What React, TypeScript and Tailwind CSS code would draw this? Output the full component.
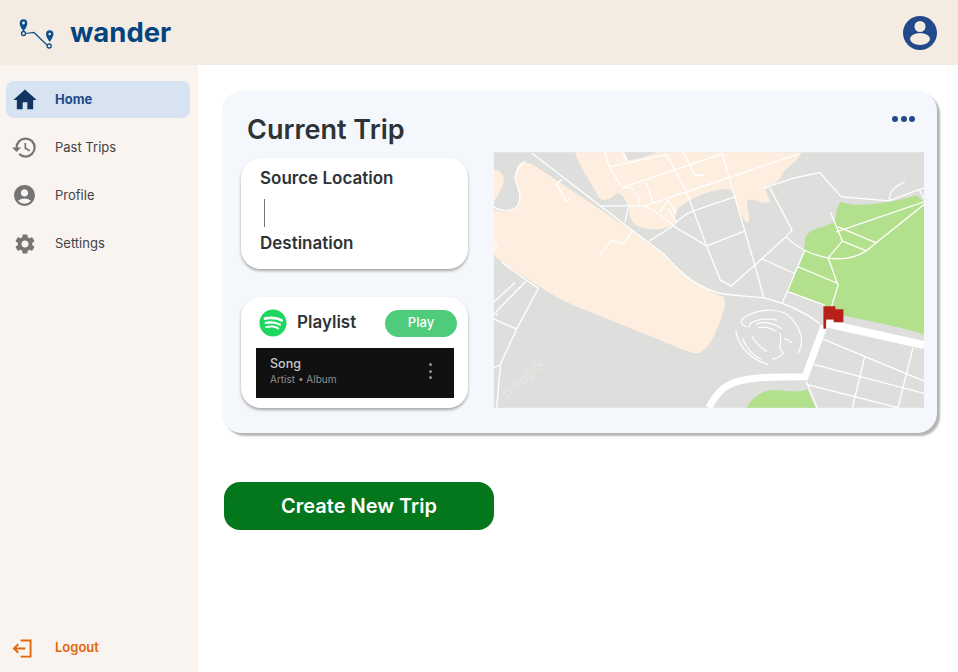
import { MdAccountCircle, MdHistory, MdHome, MdSettings } from 'react-icons/md';
import { FaSpotify } from 'react-icons/fa';

const thinRoads = [
    'M125 203 L420 430 L520 505 C570 560 610 600 680 622 C740 635 790 632 830 640 C890 655 950 685 990 715',
    'M12 365 C30 378 60 382 80 365 C100 340 85 310 75 280 C78 255 90 240 105 228',
    'M200 295 L228 348 L240 342 M200 295 L217 282',
    'M330 362 L465 362 M415 365 L405 412',
    'M428 437 L400 475 L365 465 L330 508',
    'M358 245 L530 208 M345 201 L358 245 L397 307 L425 307 L447 335 L447 360 M397 201 L412 228',
    'M397 307 L700 205 M470 293 L490 355 M530 208 L590 320 L650 482 L692 585 L724 602 L795 540 L888 455 L907 435 L840 308',
    'M580 201 L615 270 L646 270',
    'M465 362 L930 205 M465 362 C490 372 520 395 555 425 L650 482',
    'M510 380 L535 345 L560 385 M535 372 L560 410',
    'M477 468 L545 425 C570 400 590 385 608 378 L735 335',
    'M650 482 L765 438',
    'M697 205 L795 540 L822 638',
    'M820 310 L905 280 L990 262 L1055 335 L1198 347 L1303 308',
    'M1198 347 C1200 320 1210 305 1245 290',
    'M1290 315 L1303 340',
    'M888 455 C930 495 970 510 1015 518 C1070 528 1120 510 1150 480 L1303 358',
    'M1022 380 L1058 468 L1015 518 L1045 600 L1025 665',
    'M1040 440 L1303 350 M1045 425 L1160 473 M1058 468 L1130 497',
    'M945 495 L877 655 M815 520 L915 565 M925 545 L1045 595 M890 618 L1005 660',
    'M12 702 L80 732 M35 532 L145 610 L80 732 L32 835 L20 968 M12 848 L32 838',
    'M12 650 L75 592 M18 680 L108 588 M12 682 L24 690',
    'M1000 762 L1303 888 M972 838 L1303 925 M950 898 L1225 968',
    'M1125 815 L1088 968 M1270 788 L1225 968 M950 890 L982 968',
    'M12 470 L20 482 L12 495',
];

const rings = [
    'M770 725 C745 715 750 700 780 688 C820 668 880 670 905 700 C935 735 945 770 925 803',
    'M738 735 C745 790 790 825 835 838',
    'M758 760 C770 790 790 810 812 822 M788 755 C795 770 815 790 830 798',
    'M778 725 C775 710 820 695 860 705 M800 718 C820 705 850 715 875 730 M805 728 C825 722 845 730 858 738',
    'M870 745 C880 765 860 790 880 802 M885 762 C895 762 900 768 905 772',
    'M848 822 C860 820 872 815 880 805',
];

function Logo() {
    return (
        <svg viewBox="0 0 40 34" className="h-[34px] w-[40px] text-[#0b4f8a]" fill="none">
            <path d="M5.5 15.5 C2.5 11 1.7 9.5 1.7 7 A3.8 3.8 0 0 1 9.3 7 C9.3 9.5 8.5 11 5.5 15.5Z" fill="currentColor" />
            <circle cx="5.5" cy="7" r="1.4" fill="#f4ebe3" />
            <circle cx="5.5" cy="17.5" r="2" stroke="currentColor" strokeWidth="1.3" />
            <path d="M7.5 17.5 L16 16.5 L29 29" stroke="currentColor" strokeWidth="1.2" />
            <path d="M31.7 26 C28.8 21.5 28 20 28 18 A3.7 3.7 0 0 1 35.4 18 C35.4 20 34.6 21.5 31.7 26Z" fill="currentColor" />
            <circle cx="31.7" cy="18" r="1.3" fill="#f4ebe3" />
            <circle cx="31.2" cy="30" r="2" stroke="currentColor" strokeWidth="1.3" />
        </svg>
    );
}

function MapView() {
    return (
        <svg viewBox="12 201 1291 767" className="h-[256px] w-[430px] shrink-0">
            <rect x="12" y="201" width="1291" height="767" fill="#dededc" />
            <path d="M12 252 C35 255 45 275 40 295 C35 315 20 335 12 350Z" fill="#fdeee0" />
            <path
                d="M90 235 C105 225 125 235 140 245 L420 432 L520 505 C570 560 610 600 700 635 C710 650 705 670 695 695 C680 740 660 790 630 803 C605 810 570 790 510 765 L250 660 C190 635 110 580 35 530 L12 512 L12 372 C30 382 70 385 88 355 C95 325 78 300 75 272 C76 255 82 242 90 235Z"
                fill="#fdeee0"
            />
            <path
                d="M255 201 L935 201 C925 225 905 240 885 255 C870 275 875 290 830 305 C820 320 845 340 838 350 C820 360 790 335 772 345 C770 370 785 400 775 412 C760 418 740 345 725 315 C690 305 640 325 600 345 C570 360 555 375 555 410 C545 425 520 435 490 432 C450 430 415 420 418 368 C410 350 395 320 380 325 C360 340 345 355 325 335 C310 300 270 250 255 201Z"
                fill="#fdeee0"
            />
            <path d="M405 201 L500 201 C470 215 440 222 415 225Z" fill="#dededc" />
            <path
                d="M1052 350 C1100 368 1200 355 1280 330 L1303 350 L1303 748 C1220 720 1120 705 1060 690 L1005 660 L890 615 L905 585 C930 540 945 510 945 465 C950 435 985 430 1000 425 L1035 410 C1040 385 1040 365 1052 350Z"
                fill="#b2e08c"
            />
            <path d="M770 968 C790 935 815 915 860 915 C890 917 930 925 952 912 L978 968Z" fill="#b2e08c" />
            {thinRoads.map((d) => (
                <path key={d} d={d} fill="none" stroke="white" strokeWidth="4" />
            ))}
            {rings.map((d) => (
                <path key={d} d={d} fill="none" stroke="white" strokeWidth="3.5" strokeLinecap="round" />
            ))}
            <path d="M1010 715 L1303 780" fill="none" stroke="white" strokeWidth="24" />
            <path d="M1003 722 L946 875 C860 875 790 875 735 892 C695 905 675 935 657 968" fill="none" stroke="white" strokeWidth="21" />
            <path d="M1001 663 L1037 663 L1037 672 L1061 672 L1061 711 L1032 711 L1032 703 L1009 703 L1009 731 L1001 731Z" fill="#b8211a" />
            <text x="52" y="945" transform="rotate(-42 52 945)" fontSize="48" fill="white" opacity="0.22" fontFamily="Inter, sans-serif">
                freepik
            </text>
        </svg>
    );
}

export default function App() {
    return (
        <div className="flex h-[672px] flex-col bg-white font-['Inter',sans-serif]">
            {/* Top bar */}
            <header className="flex h-[65px] shrink-0 items-center justify-between bg-[#f4ebe3] pr-[21px] pl-[18px]">
                <div className="flex items-center gap-[12px]">
                    <Logo />
                    <span className="text-[27.5px] leading-none font-bold text-[#03447f]">wander</span>
                </div>
                <svg viewBox="0 0 34 34" className="h-[34px] w-[34px]">
                    <circle cx="17" cy="17" r="17" fill="#224a8b" />
                    <circle cx="17" cy="10.5" r="5.5" fill="#f4ebe3" />
                    <ellipse cx="17" cy="23" rx="10" ry="6" fill="#f4ebe3" />
                </svg>
            </header>

            <div className="flex min-h-0 flex-1">
                {/* Sidebar */}
                <aside className="flex w-[198px] shrink-0 flex-col justify-between bg-[#f9f4f0] pt-[16px] pr-[8px] pb-[12px] pl-[6px]">
                    <nav className="flex flex-col gap-[11px] text-[13px] text-[#3f4346]">
                        <a className="flex h-[37px] items-center rounded-lg bg-[#d8e3f2] font-bold text-[#224a8b]">
                            <span className="flex w-[49px] justify-center pr-[12px] text-[#123461]">
                                <MdHome size={28} />
                            </span>
                            Home
                        </a>
                        <a className="flex h-[37px] items-center">
                            <span className="flex w-[49px] justify-center pr-[12px] text-[#757575]">
                                <MdHistory size={27} />
                            </span>
                            Past Trips
                        </a>
                        <a className="flex h-[37px] items-center">
                            <span className="flex w-[49px] justify-center pr-[12px] text-[#757575]">
                                <MdAccountCircle size={25} />
                            </span>
                            Profile
                        </a>
                        <a className="flex h-[37px] items-center">
                            <span className="flex w-[49px] justify-center pr-[12px] text-[#757575]">
                                <MdSettings size={24} />
                            </span>
                            Settings
                        </a>
                    </nav>
                    <a className="flex h-[24px] items-center text-[13px] font-semibold text-[#e2660c]">
                        <span className="flex w-[49px] justify-center pr-[17px]">
                            <svg viewBox="0 0 22 20" className="h-[19px] w-[21px]" fill="none" stroke="currentColor" strokeWidth="2">
                                <path d="M9 1.5 H19.5 V18.5 H9" />
                                <path d="M14 10 H2 M6.5 5.5 L2 10 L6.5 14.5" />
                            </svg>
                        </span>
                        Logout
                    </a>
                </aside>

                {/* Main */}
                <main className="flex-1 pt-[26px] pr-[21px] pl-[24px]">
                    <section className="rounded-[20px] bg-[#f4f7fb] pr-[13px] pb-[25px] pl-[19px] shadow-[3px_3px_2px_#b5b5b5]">
                        <div className="flex h-[61px] items-center justify-between pt-[15px] pl-[6px]">
                            <h1 className="text-[27px] leading-none font-semibold text-[#2d3336]">Current Trip</h1>
                            <div className="flex gap-[2.5px] pr-[9px] pb-[20px]">
                                <span className="h-[6px] w-[6px] rounded-full bg-[#224a8b]" />
                                <span className="h-[6px] w-[6px] rounded-full bg-[#224a8b]" />
                                <span className="h-[6px] w-[6px] rounded-full bg-[#224a8b]" />
                            </div>
                        </div>
                        <div className="flex items-end gap-[26px]">
                            <div className="flex w-[227px] flex-col gap-[28px]">
                                <div className="flex h-[111px] flex-col rounded-[20px] bg-white px-[19px] pt-[10px] text-[17px] leading-[20px] font-semibold text-[#2d3336] shadow-[0_2px_3px_#a8a8a8]">
                                    <p>Source Location</p>
                                    <div className="my-[11px] ml-[4px] h-[28px] w-px bg-[#777777]" />
                                    <p className="-mt-[5px]">Destination</p>
                                </div>
                                <div className="h-[111px] rounded-[20px] bg-white pt-[12px] pr-[14px] pl-[15px] shadow-[0_2px_3px_#a8a8a8]">
                                    <div className="flex h-[28px] items-center">
                                        <FaSpotify size={28} className="ml-[3px] text-[#1ed760]" />
                                        <span className="ml-[10px] text-[17px] font-semibold text-[#2d3336]">Playlist</span>
                                        <button className="mr-[-3px] ml-auto h-[27px] w-[72px] rounded-full bg-[#4ecb7b] text-[13px] font-medium text-white">
                                            Play
                                        </button>
                                    </div>
                                    <div className="mt-[11px] flex h-[50px] items-center justify-between bg-[#111111] pr-[22px] pl-[14px]">
                                        <div className="pb-[4px]">
                                            <p className="text-[12.5px] leading-[16px] font-medium text-[#c9c9c9]">Song</p>
                                            <p className="text-[10px] leading-[14px] text-[#8f8f8f]">Artist • Album</p>
                                        </div>
                                        <div className="flex flex-col gap-[3.5px] pb-[4px]">
                                            <span className="h-[3px] w-[3px] rounded-full bg-[#8f8f8f]" />
                                            <span className="h-[3px] w-[3px] rounded-full bg-[#8f8f8f]" />
                                            <span className="h-[3px] w-[3px] rounded-full bg-[#8f8f8f]" />
                                        </div>
                                    </div>
                                </div>
                            </div>
                            <MapView />
                        </div>
                    </section>
                    <button className="mt-[49px] ml-[2px] h-[48px] w-[270px] rounded-2xl bg-[#04771c] text-[20px] font-semibold text-white">
                        Create New Trip
                    </button>
                </main>
            </div>
        </div>
    );
}
